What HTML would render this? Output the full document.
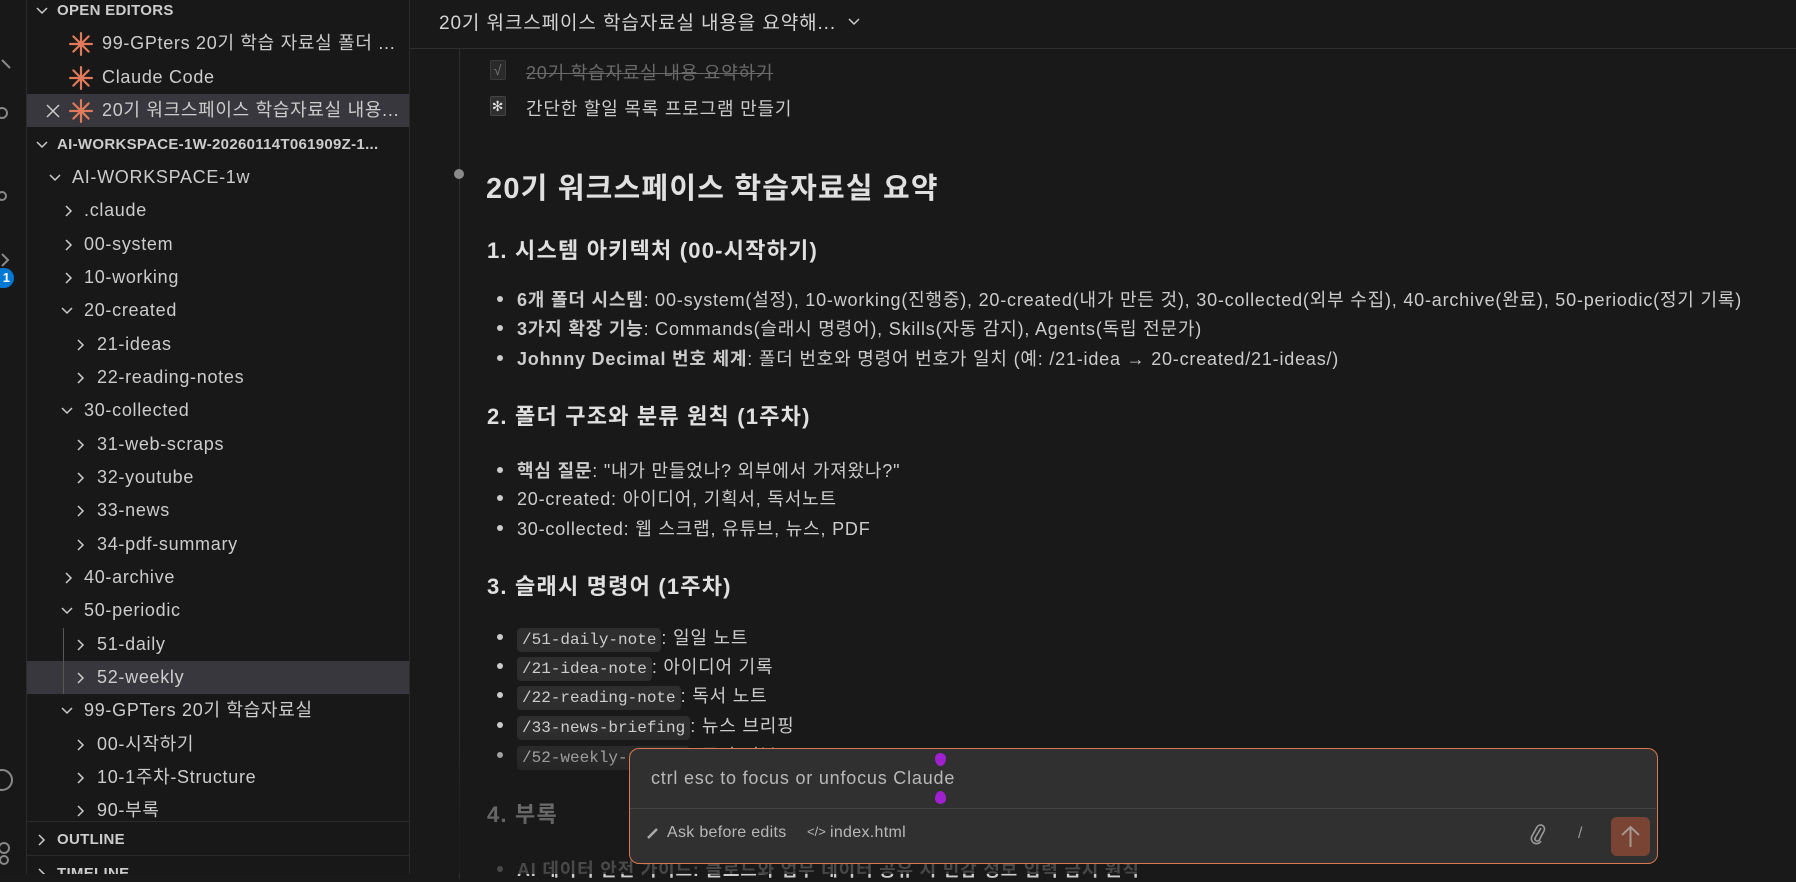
<!DOCTYPE html>
<html><head><meta charset="utf-8">
<style>
*{margin:0;padding:0;box-sizing:border-box}
body{width:1796px;height:874px;overflow:hidden;background:#191919;font-family:"Liberation Sans","Noto Sans CJK KR",sans-serif;color:#cccccc;position:relative}
.abs{position:absolute;white-space:nowrap}
#act{left:0;top:0;width:27px;height:874px;background:#181818;border-right:1px solid #2b2b2b}
#side{left:27px;top:0;width:383px;height:874px;background:#181818;border-right:1px solid #2b2b2b;overflow:hidden}
.row{position:absolute;left:0;width:382px;height:33px;font-size:18px;letter-spacing:0.7px;line-height:33px;color:#cccccc}
.row .t{position:absolute;top:0}
.row svg{position:absolute;top:10px}
.hdr{font-weight:bold;font-size:15px;letter-spacing:0.3px}
.sel{background:#37373d}
.main{font-size:18px;letter-spacing:0.8px;color:#cccccc}
.b{font-weight:bold}
.code{font-family:"Liberation Mono",monospace;background:#2e2e2e;border-radius:4px;padding:3px 5px;font-size:16px;letter-spacing:0}
.dot{position:absolute;width:6px;height:6px;border-radius:50%;background:#cccccc}
.hh{letter-spacing:1.2px}
</style></head><body>
<div id="act" class="abs">
  <svg class="abs" style="left:0;top:52px" width="20" height="30"><path d="M2 8 L10 16" stroke="#888" stroke-width="2" fill="none"/></svg>
  <svg class="abs" style="left:0;top:100px" width="20" height="30"><circle cx="2" cy="13" r="5" stroke="#888" stroke-width="2" fill="none"/></svg>
  <svg class="abs" style="left:0;top:190px" width="20" height="30"><circle cx="2" cy="6" r="4" stroke="#888" stroke-width="2" fill="none"/></svg>
  <svg class="abs" style="left:0;top:250px" width="20" height="20"><path d="M2 4 L8 10 L2 16" stroke="#888" stroke-width="2" fill="none"/></svg>
  <div class="abs" style="left:-8px;top:268px;width:22px;height:20px;border-radius:10px;background:#0078d4;color:#fff;font-size:13px;font-weight:bold;line-height:20px;text-align:right;padding-right:4px">1</div>
  <svg class="abs" style="left:0;top:765px" width="20" height="30"><circle cx="2" cy="15" r="10" stroke="#888" stroke-width="2" fill="none"/></svg>
  <svg class="abs" style="left:0;top:838px" width="20" height="30"><circle cx="4" cy="10" r="5" stroke="#888" stroke-width="2" fill="none"/><circle cx="4" cy="22" r="4" stroke="#888" stroke-width="2" fill="none"/></svg>
</div>
<div id="side" class="abs">
<div class="row hdr" style="top:-6px"><svg style="left:8px" width="14" height="14"><path d="M2 4 L7 9 L12 4" stroke="#ccc" stroke-width="1.5" fill="none"/></svg><span class="t" style="left:30px">OPEN EDITORS</span></div>
<div class="row" style="top:27px"><svg style="left:42px;top:5px" width="24" height="24" viewBox="0 0 22 22"><g stroke="#e07a5a" stroke-width="2" stroke-linecap="round"><path d="M11 1V21M1 11H21M4 4L18 18M18 4L4 18"/></g></svg><span class="t" style="left:75px">99-GPters 20기 학습 자료실 폴더 ...</span></div>
<div class="row" style="top:61px"><svg style="left:42px;top:5px" width="24" height="24" viewBox="0 0 22 22"><g stroke="#e07a5a" stroke-width="2" stroke-linecap="round"><path d="M11 1V21M1 11H21M4 4L18 18M18 4L4 18"/></g></svg><span class="t" style="left:75px">Claude Code</span></div>
<div class="row sel" style="top:94px"><svg style="left:19px" width="14" height="14"><path d="M1 1L13 13M13 1L1 13" stroke="#ccc" stroke-width="1.5"/></svg><svg style="left:42px;top:5px" width="24" height="24" viewBox="0 0 22 22"><g stroke="#e07a5a" stroke-width="2" stroke-linecap="round"><path d="M11 1V21M1 11H21M4 4L18 18M18 4L4 18"/></g></svg><span class="t" style="left:75px">20기 워크스페이스 학습자료실 내용...</span></div>
<div class="row hdr" style="top:128px"><svg style="left:8px" width="14" height="14"><path d="M2 4 L7 9 L12 4" stroke="#ccc" stroke-width="1.5" fill="none"/></svg><span class="t" style="left:30px">AI-WORKSPACE-1W-20260114T061909Z-1...</span></div>
<div class="row" style="top:161px"><svg style="left:21px" width="14" height="14"><path d="M2 4 L7 9 L12 4" stroke="#ccc" stroke-width="1.5" fill="none"/></svg><span class="t" style="left:45px">AI-WORKSPACE-1w</span></div>
<div class="row" style="top:194px"><svg style="left:35px" width="14" height="14"><path d="M4 2 L9 7 L4 12" stroke="#ccc" stroke-width="1.5" fill="none"/></svg><span class="t" style="left:57px">.claude</span></div>
<div class="row" style="top:228px"><svg style="left:35px" width="14" height="14"><path d="M4 2 L9 7 L4 12" stroke="#ccc" stroke-width="1.5" fill="none"/></svg><span class="t" style="left:57px">00-system</span></div>
<div class="row" style="top:261px"><svg style="left:35px" width="14" height="14"><path d="M4 2 L9 7 L4 12" stroke="#ccc" stroke-width="1.5" fill="none"/></svg><span class="t" style="left:57px">10-working</span></div>
<div class="row" style="top:294px"><svg style="left:33px" width="14" height="14"><path d="M2 4 L7 9 L12 4" stroke="#ccc" stroke-width="1.5" fill="none"/></svg><span class="t" style="left:57px">20-created</span></div>
<div class="row" style="top:328px"><svg style="left:47px" width="14" height="14"><path d="M4 2 L9 7 L4 12" stroke="#ccc" stroke-width="1.5" fill="none"/></svg><span class="t" style="left:70px">21-ideas</span></div>
<div class="row" style="top:361px"><svg style="left:47px" width="14" height="14"><path d="M4 2 L9 7 L4 12" stroke="#ccc" stroke-width="1.5" fill="none"/></svg><span class="t" style="left:70px">22-reading-notes</span></div>
<div class="row" style="top:394px"><svg style="left:33px" width="14" height="14"><path d="M2 4 L7 9 L12 4" stroke="#ccc" stroke-width="1.5" fill="none"/></svg><span class="t" style="left:57px">30-collected</span></div>
<div class="row" style="top:428px"><svg style="left:47px" width="14" height="14"><path d="M4 2 L9 7 L4 12" stroke="#ccc" stroke-width="1.5" fill="none"/></svg><span class="t" style="left:70px">31-web-scraps</span></div>
<div class="row" style="top:461px"><svg style="left:47px" width="14" height="14"><path d="M4 2 L9 7 L4 12" stroke="#ccc" stroke-width="1.5" fill="none"/></svg><span class="t" style="left:70px">32-youtube</span></div>
<div class="row" style="top:494px"><svg style="left:47px" width="14" height="14"><path d="M4 2 L9 7 L4 12" stroke="#ccc" stroke-width="1.5" fill="none"/></svg><span class="t" style="left:70px">33-news</span></div>
<div class="row" style="top:528px"><svg style="left:47px" width="14" height="14"><path d="M4 2 L9 7 L4 12" stroke="#ccc" stroke-width="1.5" fill="none"/></svg><span class="t" style="left:70px">34-pdf-summary</span></div>
<div class="row" style="top:561px"><svg style="left:35px" width="14" height="14"><path d="M4 2 L9 7 L4 12" stroke="#ccc" stroke-width="1.5" fill="none"/></svg><span class="t" style="left:57px">40-archive</span></div>
<div class="row" style="top:594px"><svg style="left:33px" width="14" height="14"><path d="M2 4 L7 9 L12 4" stroke="#ccc" stroke-width="1.5" fill="none"/></svg><span class="t" style="left:57px">50-periodic</span></div>
<div class="row" style="top:628px"><svg style="left:47px" width="14" height="14"><path d="M4 2 L9 7 L4 12" stroke="#ccc" stroke-width="1.5" fill="none"/></svg><span class="t" style="left:70px">51-daily</span></div>
<div class="row sel" style="top:661px"><svg style="left:47px" width="14" height="14"><path d="M4 2 L9 7 L4 12" stroke="#ccc" stroke-width="1.5" fill="none"/></svg><span class="t" style="left:70px">52-weekly</span></div>
<div class="abs" style="left:36px;top:628px;width:1px;height:66px;background:#585858"></div>
<div class="row" style="top:694px"><svg style="left:33px" width="14" height="14"><path d="M2 4 L7 9 L12 4" stroke="#ccc" stroke-width="1.5" fill="none"/></svg><span class="t" style="left:57px">99-GPTers 20기 학습자료실</span></div>
<div class="row" style="top:728px"><svg style="left:47px" width="14" height="14"><path d="M4 2 L9 7 L4 12" stroke="#ccc" stroke-width="1.5" fill="none"/></svg><span class="t" style="left:70px">00-시작하기</span></div>
<div class="row" style="top:761px"><svg style="left:47px" width="14" height="14"><path d="M4 2 L9 7 L4 12" stroke="#ccc" stroke-width="1.5" fill="none"/></svg><span class="t" style="left:70px">10-1주차-Structure</span></div>
<div class="row" style="top:794px"><svg style="left:47px" width="14" height="14"><path d="M4 2 L9 7 L4 12" stroke="#ccc" stroke-width="1.5" fill="none"/></svg><span class="t" style="left:70px">90-부록</span></div>
<div class="abs" style="left:0;top:821px;width:382px;height:1px;background:#2b2b2b"></div>
<div class="row hdr" style="top:823px"><svg style="left:8px" width="14" height="14"><path d="M4 2 L9 7 L4 12" stroke="#ccc" stroke-width="1.5" fill="none"/></svg><span class="t" style="left:30px">OUTLINE</span></div>
<div class="abs" style="left:0;top:855px;width:382px;height:1px;background:#2b2b2b"></div>
<div class="row hdr" style="top:857px"><svg style="left:8px" width="14" height="14"><path d="M4 2 L9 7 L4 12" stroke="#ccc" stroke-width="1.5" fill="none"/></svg><span class="t" style="left:30px">TIMELINE</span></div>
</div>

<!-- header -->
<div class="abs" style="left:439px;top:8px;font-size:19px;letter-spacing:0.9px;color:#d4d4d4">20기 워크스페이스 학습자료실 내용을 요약해...</div>
<svg class="abs" style="left:847px;top:15px" width="14" height="14"><path d="M2 4 L7 9 L12 4" stroke="#ccc" stroke-width="1.5" fill="none"/></svg>
<div class="abs" style="left:411px;top:48px;width:1385px;height:1px;background:#2e2e2e"></div>

<!-- content -->
<div class="abs" style="left:459px;top:49px;width:1px;height:830px;background:#2e2e2e"></div>
<div class="abs" style="left:454px;top:169px;width:10px;height:10px;border-radius:50%;background:#8a8a8a"></div>
<div class="main">
<div class="abs" style="left:490px;top:60px;width:16px;height:20px;background:#2a2a2a;border:1px solid #3a3a3a;border-radius:2px;color:#777;font-size:14px;text-align:center;line-height:18px">√</div>
<div class="abs" style="left:526px;top:59px;color:#6a6a6a;text-decoration:line-through">20기 학습자료실 내용 요약하기</div>
<div class="abs" style="left:490px;top:96px;width:16px;height:20px;background:#2f2f2f;border:1px solid #444;border-radius:2px;color:#ddd;font-size:14px;text-align:center;line-height:18px">✻</div>
<div class="abs" style="left:526px;top:95px">간단한 할일 목록 프로그램 만들기</div>

<div class="abs b hh" style="left:486px;top:165px;font-size:29px;color:#e0e0e0">20기 워크스페이스 학습자료실 요약</div>
<div class="abs b hh" style="left:487px;top:233px;font-size:22px;color:#e0e0e0">1. 시스템 아키텍처 (00-시작하기)</div>
<div class="dot" style="left:497px;top:296px"></div><div class="abs" style="left:517px;top:286px"><span class="b">6개 폴더 시스템</span>: 00-system(설정), 10-working(진행중), 20-created(내가 만든 것), 30-collected(외부 수집), 40-archive(완료), 50-periodic(정기 기록)</div>
<div class="dot" style="left:497px;top:325px"></div><div class="abs" style="left:517px;top:315px"><span class="b">3가지 확장 기능</span>: Commands(슬래시 명령어), Skills(자동 감지), Agents(독립 전문가)</div>
<div class="dot" style="left:497px;top:355px"></div><div class="abs" style="left:517px;top:345px"><span class="b">Johnny Decimal 번호 체계</span>: 폴더 번호와 명령어 번호가 일치 (예: /21-idea → 20-created/21-ideas/)</div>

<div class="abs b hh" style="left:487px;top:399px;font-size:22px;color:#e0e0e0">2. 폴더 구조와 분류 원칙 (1주차)</div>
<div class="dot" style="left:497px;top:467px"></div><div class="abs" style="left:517px;top:457px"><span class="b">핵심 질문</span>: "내가 만들었나? 외부에서 가져왔나?"</div>
<div class="dot" style="left:497px;top:495px"></div><div class="abs" style="left:517px;top:485px">20-created: 아이디어, 기획서, 독서노트</div>
<div class="dot" style="left:497px;top:525px"></div><div class="abs" style="left:517px;top:515px">30-collected: 웹 스크랩, 유튜브, 뉴스, PDF</div>

<div class="abs b hh" style="left:487px;top:569px;font-size:22px;color:#e0e0e0">3. 슬래시 명령어 (1주차)</div>
<div class="dot" style="left:497px;top:634px"></div><div class="abs" style="left:517px;top:624px"><span class="code">/51-daily-note</span>: 일일 노트</div>
<div class="dot" style="left:497px;top:663px"></div><div class="abs" style="left:517px;top:653px"><span class="code">/21-idea-note</span>: 아이디어 기록</div>
<div class="dot" style="left:497px;top:692px"></div><div class="abs" style="left:517px;top:682px"><span class="code">/22-reading-note</span>: 독서 노트</div>
<div class="dot" style="left:497px;top:722px"></div><div class="abs" style="left:517px;top:712px"><span class="code">/33-news-briefing</span>: 뉴스 브리핑</div>
<div class="dot" style="left:497px;top:752px"></div><div class="abs" style="left:517px;top:742px"><span class="code">/52-weekly-review</span>: 주간 리뷰</div>
<div class="abs b hh" style="left:487px;top:797px;font-size:22px;color:#e0e0e0">4. 부록</div>
<div class="dot" style="left:497px;top:866px"></div><div class="abs b" style="left:517px;top:856px">AI 데이터 안전 가이드: 클로드와 업무 데이터 공유 시 민감 정보 입력 금지 원칙</div>
</div>
<div class="abs" style="left:411px;top:730px;width:1385px;height:144px;background:linear-gradient(to bottom,rgba(25,25,25,0) 0%,rgba(25,25,25,0.55) 40%,rgba(25,25,25,0.75) 100%)"></div>

<!-- input box -->
<div class="abs" style="left:629px;top:748px;width:1029px;height:116px;background:#303030;border:1.5px solid #d9774e;border-radius:10px">
  <div class="abs" style="left:21px;top:19px;font-size:18px;letter-spacing:0.8px;color:#b8b8b8">ctrl esc to focus or unfocus Claude</div>
  <div class="abs" style="left:305px;top:4px;width:11px;height:13px;border-radius:50% 50% 50% 50%/40% 40% 60% 60%;background:#a020d0"></div>
  <div class="abs" style="left:305px;top:42px;width:11px;height:13px;border-radius:50%/60% 60% 40% 40%;background:#a020d0"></div>
  <div class="abs" style="left:0;top:59px;width:1026px;height:1px;background:#444"></div>
  <svg class="abs" style="left:16px;top:77px" width="14" height="14"><path d="M2 12 L11 3" stroke="#aaa" stroke-width="2.5"/></svg>
  <div class="abs" style="left:37px;top:75px;font-size:16px;letter-spacing:0.3px;color:#b8b8b8">Ask before edits</div>
  <div class="abs" style="left:177px;top:75px;font-size:13px;color:#b8b8b8">&lt;/&gt;</div>
  <div class="abs" style="left:200px;top:75px;font-size:16px;letter-spacing:0.3px;color:#b8b8b8">index.html</div>
  <svg class="abs" style="left:899px;top:73px" width="18" height="24" viewBox="0 0 18 24"><path d="M12 6 L6 16 a2.5 2.5 0 0 0 4 2.5 L15 9 a4 4 0 0 0 -7 -4 L3 14 a5 5 0 0 0 9 5" stroke="#999" stroke-width="1.6" fill="none"/></svg>
  <div class="abs" style="left:948px;top:76px;font-size:16px;color:#999">/</div>
  <div class="abs" style="left:981px;top:68px;width:39px;height:39px;border-radius:6px;background:#7a4434">
    <svg width="39" height="39"><path d="M19.5 30 V10 M11 18 L19.5 10 L28 18" stroke="#a5978f" stroke-width="2" fill="none"/></svg>
  </div>
</div>
</body></html>
